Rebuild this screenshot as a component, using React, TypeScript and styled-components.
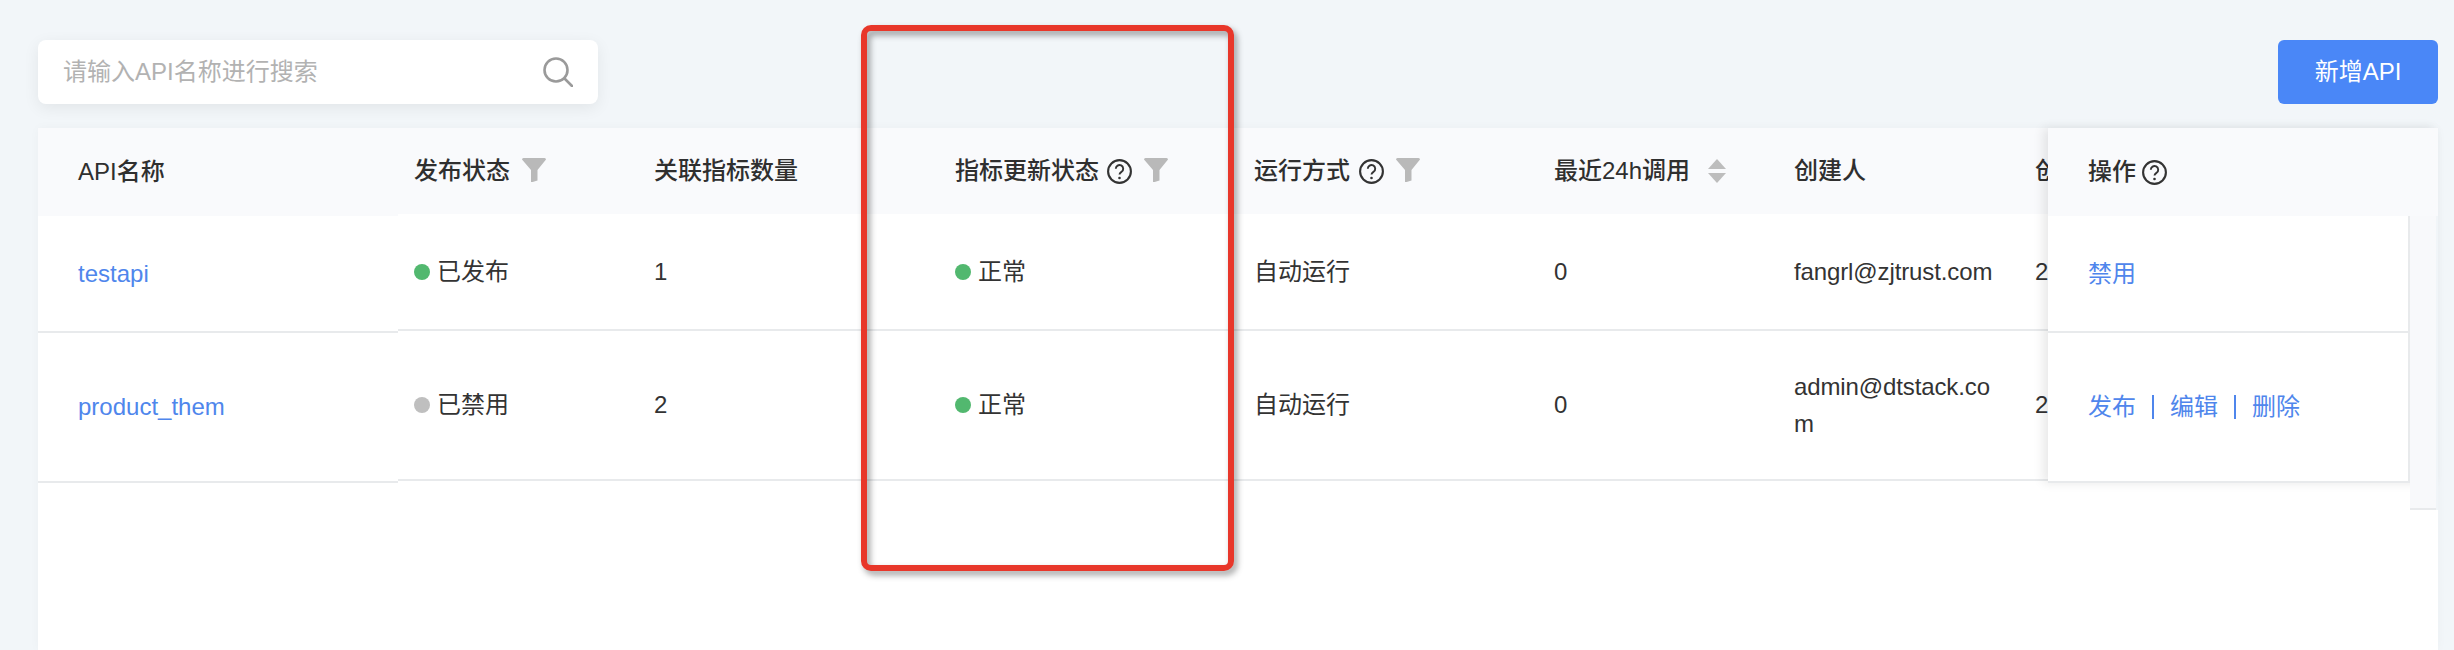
import React from "react";
import styled, { createGlobalStyle } from "styled-components";

const GlobalStyle = createGlobalStyle`
  html, body {
    margin: 0;
    height: 100%;
    overflow: hidden;
    background: #f2f6f9;
  }
  #root {
    height: 100%;
  }
  * {
    box-sizing: border-box;
  }
`;

const LINE = "#e8eaec";
const LINK = "#4f86ec";

const Page = styled.div`
  position: relative;
  display: flex;
  flex-direction: column;
  height: 100%;
  padding: 40px 16px 0 38px;
  font-family: "Liberation Sans", "Noto Sans CJK SC", sans-serif;
  font-size: 24px;
  line-height: 36px;
  color: #333;
`;

const Toolbar = styled.div`
  display: flex;
  justify-content: space-between;
  height: 64px;
  margin-bottom: 24px;
`;

const SearchBox = styled.div`
  display: flex;
  align-items: center;
  width: 560px;
  padding: 0 25px;
  background: #fff;
  border-radius: 8px;
  box-shadow: 0 4px 16px rgba(0, 0, 0, 0.07);
`;

const SearchInput = styled.input`
  flex: 1;
  min-width: 0;
  padding: 0;
  border: none;
  outline: none;
  background: transparent;
  font: inherit;
  color: #333;

  &::placeholder {
    color: #b2b2b2;
    opacity: 1;
  }
`;

const AddButton = styled.button`
  width: 160px;
  border: none;
  border-radius: 6px;
  background: #4a87f7;
  color: #fff;
  font: inherit;
`;

const Card = styled.div`
  flex: 1;
  display: flex;
  min-height: 0;
  background: #fff;
  box-shadow: 0 0 10px rgba(0, 0, 0, 0.03);
`;

const FixedLeft = styled.div`
  flex: 0 0 360px;
`;

const Scroller = styled.div`
  flex: 1;
  min-width: 0;
  overflow: hidden;
`;

const FixedRight = styled.div`
  flex: 0 0 390px;
  height: 355px;
  background: #fff;
  box-shadow: -5px 0 10px rgba(0, 0, 0, 0.09);
`;

const HeadRow = styled.div<{ $height: number; $columns?: string }>`
  display: ${(p) => (p.$columns ? "grid" : "flex")};
  grid-template-columns: ${(p) => p.$columns || "none"};
  height: ${(p) => p.$height}px;
  background: #f9fafc;
`;

const BodyRow = styled.div<{ $height: number; $columns?: string }>`
  display: ${(p) => (p.$columns ? "grid" : "flex")};
  grid-template-columns: ${(p) => p.$columns || "none"};
  height: ${(p) => p.$height}px;
  border-bottom: 2px solid ${LINE};
`;

const Cell = styled.div<{ $inset?: number }>`
  display: flex;
  align-items: center;
  min-width: 0;
  padding: 0 16px 0 ${(p) => p.$inset || 16}px;
  white-space: nowrap;
`;

const WrapText = styled.span`
  white-space: normal;
  word-break: break-all;
  letter-spacing: -0.12px;
  line-height: 37px;
`;

const HeadLabel = styled.span`
  font-weight: 500;
  color: #2f2f2f;
`;

const HelpWrap = styled.span<{ $gap: number }>`
  display: inline-flex;
  margin-left: ${(p) => p.$gap}px;
`;

const FunnelWrap = styled.span<{ $gap: number }>`
  display: inline-flex;
  margin: -2px 0 0 ${(p) => p.$gap}px;
`;

const SortWrap = styled.span`
  display: inline-flex;
  margin-left: 18px;
`;

const Link = styled.a`
  color: ${LINK};
`;

const Dot = styled.i<{ $color: string }>`
  flex: none;
  width: 16px;
  height: 16px;
  margin-right: 7px;
  border-radius: 50%;
  background: ${(p) => p.$color};
`;

const ActionBar = styled.span`
  flex: none;
  width: 2px;
  height: 24px;
  margin: 0 16px;
  background: ${LINK};
`;

const RightBody = styled.div`
  display: flex;
  align-items: flex-start;
`;

const RightRows = styled.div`
  flex: 0 0 362px;
`;

const RightRow = styled(BodyRow)`
  border-right: 2px solid ${LINE};
`;

const ScrollStrip = styled.div`
  flex: 0 0 26px;
  height: 294px;
  background: #f8f9fb;
  border-bottom: 2px solid ${LINE};
  box-shadow: 2px 0 0 #f1f5f8;
`;

const Highlight = styled.div`
  position: absolute;
  left: 861px;
  top: 25px;
  width: 373px;
  height: 546px;
  border: 6px solid #e8372a;
  border-radius: 10px;
  filter: drop-shadow(3px 4px 3px rgba(0, 0, 0, 0.38));
  pointer-events: none;
`;

const Funnel = () => (
  <svg width="24" height="24" viewBox="0 0 24 24">
    <path d="M1.5 0H22.5Q24 0 24 1.5L15.5 12V22.5L9 24.5V12L0 1.5Q0 0 1.5 0Z" fill="#b9b9b9" />
  </svg>
);

const Help = () => (
  <svg width="25" height="25" viewBox="0 0 25 25" fill="none" stroke="#333">
    <circle cx="12.5" cy="12.5" r="11.4" strokeWidth="2.1" />
    <path d="M8.8 9.8a3.7 3.7 0 1 1 5.8 3c-1.3.9-2.1 1.4-2.1 2.8" strokeWidth="1.9" />
    <circle cx="12.5" cy="19" r="1.3" fill="#333" stroke="none" />
  </svg>
);

const Sort = () => (
  <svg width="18" height="24" viewBox="0 0 18 24">
    <path d="M9 0L18 10H0Z" fill="#bdbdbd" />
    <path d="M0 14H18L9 24Z" fill="#bdbdbd" />
  </svg>
);

const SearchIcon = () => (
  <svg width="30" height="30" viewBox="0 0 30 30" fill="none" stroke="#9a9a9a" strokeWidth="2.6">
    <circle cx="13" cy="13" r="11.5" />
    <path d="M21.5 21.5L29 29" strokeLinecap="round" />
  </svg>
);

const COLUMNS = "240px 301px 299px 300px 240px 241px 300px";

const rows = [
  {
    name: "testapi",
    left: 117,
    main: 117,
    status: "已发布",
    statusColor: "#52b86f",
    count: "1",
    creator: "fangrl@zjtrust.com",
    date: "2021-03-01",
    actions: ["禁用"],
  },
  {
    name: "product_them",
    left: 150,
    main: 150,
    status: "已禁用",
    statusColor: "#bfbfbf",
    count: "2",
    creator: "admin@dtstack.com",
    date: "2021-03-01",
    actions: ["发布", "编辑", "删除"],
  },
];

export default function App() {
  return (
    <Page>
      <GlobalStyle />
      <Toolbar>
        <SearchBox>
          <SearchInput placeholder="请输入API名称进行搜索" />
          <SearchIcon />
        </SearchBox>
        <AddButton>新增API</AddButton>
      </Toolbar>

      <Card>
        <FixedLeft>
          <HeadRow $height={88}>
            <Cell $inset={40}>
              <HeadLabel>API名称</HeadLabel>
            </Cell>
          </HeadRow>
          {rows.map((row) => (
            <BodyRow key={row.name} $height={row.left}>
              <Cell $inset={40}>
                <Link>{row.name}</Link>
              </Cell>
            </BodyRow>
          ))}
        </FixedLeft>

        <Scroller>
          <HeadRow $height={86} $columns={COLUMNS}>
            <Cell>
              <HeadLabel>发布状态</HeadLabel>
              <FunnelWrap $gap={12}>
                <Funnel />
              </FunnelWrap>
            </Cell>
            <Cell>
              <HeadLabel>关联指标数量</HeadLabel>
            </Cell>
            <Cell>
              <HeadLabel>指标更新状态</HeadLabel>
              <HelpWrap $gap={8}>
                <Help />
              </HelpWrap>
              <FunnelWrap $gap={12}>
                <Funnel />
              </FunnelWrap>
            </Cell>
            <Cell>
              <HeadLabel>运行方式</HeadLabel>
              <HelpWrap $gap={9}>
                <Help />
              </HelpWrap>
              <FunnelWrap $gap={12}>
                <Funnel />
              </FunnelWrap>
            </Cell>
            <Cell>
              <HeadLabel>最近24h调用</HeadLabel>
              <SortWrap>
                <Sort />
              </SortWrap>
            </Cell>
            <Cell>
              <HeadLabel>创建人</HeadLabel>
            </Cell>
            <Cell>
              <HeadLabel>创建时间</HeadLabel>
            </Cell>
          </HeadRow>
          {rows.map((row) => (
            <BodyRow key={row.name} $height={row.main} $columns={COLUMNS}>
              <Cell>
                <Dot $color={row.statusColor} />
                {row.status}
              </Cell>
              <Cell>{row.count}</Cell>
              <Cell>
                <Dot $color="#52b86f" />
                正常
              </Cell>
              <Cell>自动运行</Cell>
              <Cell>0</Cell>
              <Cell>
                <WrapText>{row.creator}</WrapText>
              </Cell>
              <Cell>{row.date}</Cell>
            </BodyRow>
          ))}
        </Scroller>

        <FixedRight>
          <HeadRow $height={88}>
            <Cell $inset={40}>
              <HeadLabel>操作</HeadLabel>
              <HelpWrap $gap={6}>
                <Help />
              </HelpWrap>
            </Cell>
          </HeadRow>
          <RightBody>
            <RightRows>
              {rows.map((row) => (
                <RightRow key={row.name} $height={row.left}>
                  <Cell $inset={40}>
                    {row.actions.map((action, i) => (
                      <React.Fragment key={action}>
                        {i > 0 && <ActionBar />}
                        <Link>{action}</Link>
                      </React.Fragment>
                    ))}
                  </Cell>
                </RightRow>
              ))}
            </RightRows>
            <ScrollStrip />
          </RightBody>
        </FixedRight>
      </Card>

      <Highlight />
    </Page>
  );
}
